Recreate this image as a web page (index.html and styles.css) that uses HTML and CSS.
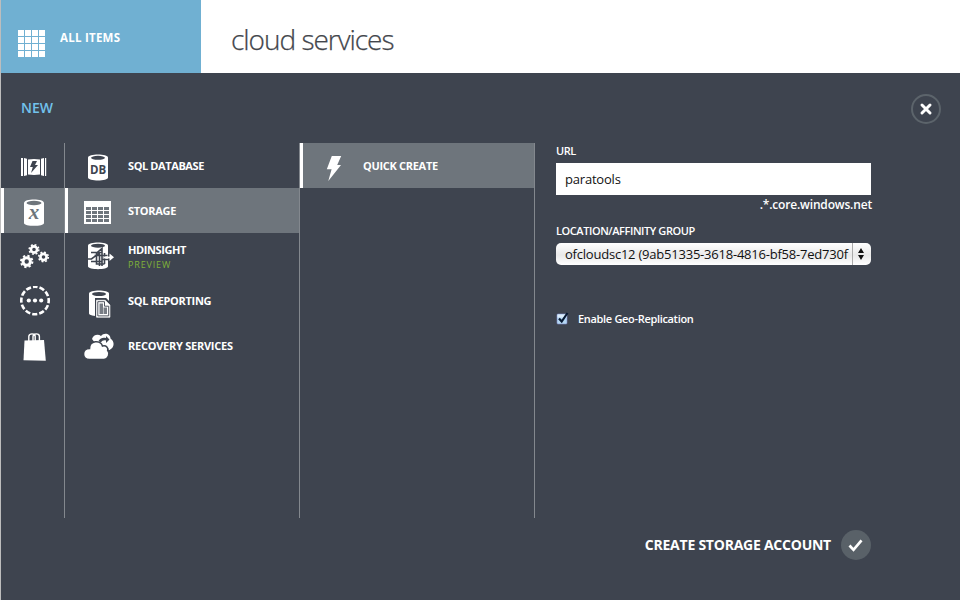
FILE: index.html
```html
<!DOCTYPE html>
<html lang="en">
<head>
<meta charset="utf-8">
<title>cloud services</title>
<link rel="stylesheet" href="styles.css">
</head>
<body>
<header class="top">
  <div class="all-items">
    <svg class="grid-icon" width="27" height="27" viewBox="0 0 27 27" fill="#fff" shape-rendering="crispEdges"><path d="M0 0h6v6H0zM7 0h6v6H7zM14 0h6v6h-6zM21 0h6v6h-6zM0 7h6v6H0zM7 7h6v6H7zM14 7h6v6h-6zM21 7h6v6h-6zM0 14h6v6H0zM7 14h6v6H7zM14 14h6v6h-6zM21 14h6v6h-6zM0 21h6v6H0zM7 21h6v6H7zM14 21h6v6h-6zM21 21h6v6h-6z"/></svg>
    <span class="all-label">ALL ITEMS</span>
  </div>
  <h1 class="title"><span>cloud services</span></h1>
</header>
<main class="drawer">
  <div class="drawer-head">
    <h2 class="new">NEW</h2>
    <button class="close" aria-label="Close"><svg width="30" height="30" viewBox="0 0 30 30"><circle cx="15" cy="15" r="14" fill="none" stroke="#5c646b" stroke-width="2"/><path d="M11 11l8 8M19 11l-8 8" stroke="#fff" stroke-width="3" stroke-linecap="round"/></svg></button>
  </div>
  <div class="columns">
    <nav class="col cats">
      <div class="row"><svg width="32" height="32" viewBox="0 0 32 32" fill="#fff"><path d="M3 7h2v18H3zM6 7l3 .7v16.600L6 25zM23 7.700l3-.7v18l-3-.7zM27 7h1.200v18H27zM10 8.500q6-.8 12 0v15q-6 .8-12 0z"/><path d="M14.500 10h4.500l-2 4h3l-7 8 1.800-6H12z" fill="#3e444f"/></svg></div>
      <div class="row selected"><svg width="32" height="32" viewBox="0 0 32 32"><path d="M6 7c0-4.600 20-4.600 20 0v20c0 3.800-20 3.800-20 0z" fill="#fff"/><ellipse cx="16" cy="7" rx="7.500" ry="2.200" fill="#6e757c"/><text class="var" x="16" y="23">x</text></svg></div>
      <div class="row"><svg width="32" height="32" viewBox="0 -1 32 32" fill="none" stroke="#fff"><g transform="translate(.5 -2.500)"><circle cx="8.200" cy="22" r="3.700" stroke-width="3"/><circle cx="8.200" cy="22" r="5.700" stroke-width="2" stroke-dasharray="2.240 2.240"/><circle cx="15.500" cy="10" r="3.100" stroke-width="2.600"/><circle cx="15.500" cy="10" r="4.800" stroke-width="1.600" stroke-dasharray="1.880 1.890"/><circle cx="25" cy="17.500" r="3.100" stroke-width="2.600"/><circle cx="25" cy="17.500" r="4.800" stroke-width="1.600" stroke-dasharray="1.880 1.890"/></g></svg></div>
      <div class="row"><svg width="32" height="32" viewBox="-.5 1 32 32"><circle cx="16.500" cy="15.500" r="13.700" fill="none" stroke="#fff" stroke-width="2.600" stroke-dasharray="5.200 1.970" stroke-dashoffset="2.600" transform="rotate(-90 16.500 15.500)"/><g fill="#fff"><circle cx="10.300" cy="15.500" r="2.100"/><circle cx="16.500" cy="15.500" r="2.100"/><circle cx="22.700" cy="15.500" r="2.100"/></g></svg></div>
      <div class="row"><svg width="32" height="32" viewBox="0 0 32 32"><path d="M6.500 9.500L26 9l1.800 20.800-22.300-.5z" fill="#fff"/><path d="M10.800 11V5.500c0-3.500 6.400-3.500 6.400 0V11M15 11V5.500c0-3.500 6.400-3.500 6.400 0V11" fill="none" stroke="#fff" stroke-width="1.400"/></svg></div>
    </nav>
    <nav class="col services">
      <div class="row"><svg width="32" height="32" viewBox="0 -2 32 32"><path d="M6 4.500C6 .4 26 .4 26 4.500v20c0 4-20 4-20 0z" fill="#fff"/><ellipse cx="16" cy="4.800" rx="7" ry="2" fill="#3e444f"/><text class="db" x="16" y="20.500">DB</text></svg><span class="label w-sqldb">SQL DATABASE</span></div>
      <div class="row selected"><svg width="32" height="32" viewBox="0 -1 32 32" shape-rendering="crispEdges"><path d="M2 4h27v23H2z" fill="#fff"/><path d="M4 10h5v3H4zM10 10h5v3h-5zM16 10h5v3h-5zM22 10h5v3h-5zM4 14h5v3H4zM10 14h5v3h-5zM16 14h5v3h-5zM22 14h5v3h-5zM4 18h5v3H4zM10 18h5v3h-5zM16 18h5v3h-5zM22 18h5v3h-5zM4 22h5v3H4zM10 22h5v3h-5zM16 22h5v3h-5zM22 22h5v3h-5z" fill="#6e757c"/></svg><span class="label">STORAGE</span></div>
      <div class="row"><svg width="32" height="32" viewBox="0 0 32 32" fill="none"><path d="M6 4.500C6 .5 26 .5 26 4.500v20.800c0 3.800-20 3.800-20 0z" fill="#fff"/><ellipse cx="16" cy="4.700" rx="7" ry="2" fill="#3e444f"/><path d="M9 11.500h9L9.500 18H6M9 20.500h11.500M12.500 14.500h13M14.500 12v11h8M14.500 12l5.500-4.500V25M17.500 11v14M22.500 12v11M20 18.500h6" stroke="#3e444f" stroke-width="1.600"/><path d="M22 16.500h6" stroke="#fff" stroke-width="1.800"/><path d="M27.500 12.500l4.500 3.700-4.500 3.700z" fill="#fff"/></svg><span class="label stacked">HDINSIGHT<small class="preview">PREVIEW</small></span></div>
      <div class="row"><svg width="32" height="32" viewBox="0 -1 32 32"><path d="M7 6.500c0-4 20-4 20 0v20c0 3.500-20 3.500-20 0z" fill="#fff"/><ellipse cx="17" cy="7" rx="7" ry="2" fill="#3e444f"/><path d="M14.500 12.500h9l4.500 4.500v13.500H14.500z" fill="#fff" stroke="#3e444f" stroke-width="3"/><path d="M14.500 13.300h8.700l4.700 4.700v12.200H14.500z" fill="#fff" stroke="#fff" stroke-width=".7"/><path d="M15.800 14.700h6.700v4.500h4.200v9.700H15.800z" fill="#fff" stroke="#3e444f" stroke-width=".9"/><path d="M17.500 16.500h3.500V27h-3.500zM21.500 20.500h3.500V27h-3.500z" fill="#777c84"/></svg><span class="label">SQL REPORTING</span></div>
      <div class="row"><svg width="32" height="32" viewBox="0 0 32 32"><path d="M10 8C11 4 16 2.500 19 5c3-4 9.500-2.500 9.500 2.500 4.500 3 4 9.500-1 11.500h-9z" fill="#fff"/><path d="M7.500 28.500C-.5 28.500-.5 17.500 7.500 17.500c0-8 11-9 13-2.500 4-1 6 2 5.200 4.500 3 3 .3 9-3.700 9z" fill="#fff" stroke="#3e444f" stroke-width="1.600"/><path d="M16.500 10c2-3.500 5-3.500 7.500-3V5l3.500 3.500-3.500 3.500V9.500c-2-.5-4 0-5 2z" fill="#3e444f"/></svg><span class="label w-recovery">RECOVERY SERVICES</span></div>
    </nav>
    <nav class="col modes">
      <div class="row selected"><svg width="32" height="32" viewBox="0 0 32 32"><path d="M6.800 4h9.400l-4 9H16L3.300 29l3.300-11.700H1.800z" fill="#fff"/></svg><span class="label">QUICK CREATE</span></div>
    </nav>
    <form class="form">
      <label class="flabel" for="url"><span>URL</span></label>
      <input class="url" id="url" value="paratools">
      <div class="suffix"><span>.*.core.windows.net</span></div>
      <div class="flabel loc"><span>LOCATION/AFFINITY GROUP</span></div>
      <div class="select"><span class="value">ofcloudsc12 (9ab51335-3618-4816-bf58-7ed730f</span><span class="arrows"><svg width="8" height="12" viewBox="0 0 8 12"><path d="M4 0l3 5H1zM4 12l3-5H1z" fill="#111"/></svg></span></div>
      <div class="check"><svg width="14" height="14" viewBox="0 0 14 14"><rect x="1" y="3" width="10" height="10" rx="1" fill="#b4d7f3" stroke="#7f8bc9" stroke-width=".6"/><path d="M1.500 3.500h9v3h-9z" fill="#dcecfa"/><path d="M3 7.500l2.700 3L11.500 2" fill="none" stroke="#081a33" stroke-width="2.200"/></svg><span>Enable Geo-Replication</span></div>
    </form>
  </div>
  <footer class="actions">
    <span class="create">CREATE STORAGE ACCOUNT</span>
    <svg width="30" height="30" viewBox="0 0 30 30"><circle cx="15" cy="15" r="15" fill="#596168"/><path d="M8.500 15.500l4 4.300 8-9.500" fill="none" stroke="#fff" stroke-width="2.700"/></svg>
  </footer>
</main>
</body>
</html>
```
FILE: styles.css
```css
* { box-sizing: border-box; }
body {
  margin: 0;
  width: 960px;
  height: 600px;
  overflow: hidden;
  border-left: 1px solid #bdbdbd;
  background: #fff;
  color: #fff;
  font-family: "Open Sans", "Noto Sans", sans-serif;
}
svg { display: block; flex: none; }
h1, h2 { margin: 0; font-weight: 400; }
.top { display: flex; height: 73px; }
.all-items { display: flex; width: 200px; padding: 30px 0 0 17px; background: #70b0d2; }
.all-label { margin: 0 0 0 15px; font-size: 11.5px; line-height: 16px; font-weight: 700; letter-spacing: .25px; }
.title { padding: 19px 0 0 30px; color: #43464c; font: 300 28px/40px "Open Sans", sans-serif; letter-spacing: -1.020px; white-space: nowrap; -webkit-text-stroke: .25px #43464c; }
.drawer { height: 527px; background: #3e444f; }
.drawer-head { display: flex; justify-content: space-between; height: 70px; padding: 21px 19px 0 20px; }
.new { margin-top: 4px; color: #72c2ec; font-size: 14px; line-height: 20px; font-weight: 600; letter-spacing: 0; }
.close { width: 30px; height: 30px; padding: 0; border: 0; background: none; }
.columns { display: flex; height: 375px; }
.col { border-right: 1px solid #83888e; }
.cats { width: 64px; }
.services, .modes { width: 235px; }
.row { display: flex; align-items: center; height: 45px; border-left: 3px solid transparent; }
.selected { border-left-color: #fff; background: #6e757c; }
.cats .row { padding: 3px 0 0 14px; }
.services .row { padding: 3px 0 0 14px; }
.modes .row { padding: 4px 0 0 22px; }
.label { margin: -4px 0 0 14px; font-size: 11px; line-height: 15px; font-weight: 700; letter-spacing: -.3px; white-space: nowrap; }
.modes .label { margin: -4px 0 0 6px; }
.services .stacked { margin-top: 0; letter-spacing: -.4px; }
.services .w-sqldb { letter-spacing: -.4px; }
.w-recovery { letter-spacing: -.25px; }
.preview { display: block; color: #7fb239; font-size: 9px; line-height: 15px; font-weight: 400; letter-spacing: .85px; }
.var { fill: #6e757c; font: italic 700 21px "Liberation Serif", serif; text-anchor: middle; }
.db { fill: #3e444f; font: 700 11.5px "Open Sans", sans-serif; text-anchor: middle; }
.form { width: 316px; margin-left: 21px; }
.flabel { display: block; height: 20px; font-size: 11px; line-height: 16px; font-weight: 600; letter-spacing: -.42px; }
.url { display: block; width: 315px; height: 32px; padding: 0 9px; border: 0; border-radius: 0; background: #fff; color: #111; font: 13px "Open Sans", sans-serif; letter-spacing: -.2px; }
.suffix { height: 28px; font-size: 12px; line-height: 19px; font-weight: 600; letter-spacing: -.17px; text-align: right; }
.select { display: flex; width: 315px; height: 22px; overflow: hidden; border-radius: 5px; background: linear-gradient(#fff, #e9e9e9 55%, #fff); color: #111; }
.value { width: 296px; padding-left: 9px; overflow: hidden; font-size: 13px; line-height: 22px; letter-spacing: -.22px; white-space: nowrap; }
.arrows { display: flex; width: 19px; align-items: center; justify-content: center; padding-right: 2px; border-left: 1px solid #aaa; }
.check { display: flex; align-items: center; margin-top: 44px; height: 18px; font-size: 11px; font-weight: 600; }
.check span { margin-left: 8px; letter-spacing: -.32px; }
.actions { display: flex; align-items: center; justify-content: flex-end; gap: 10px; margin-top: 12px; height: 30px; padding-right: 89px; }
.create { font-size: 14px; line-height: 28px; font-weight: 700; letter-spacing: -.24px; white-space: nowrap; }
```
